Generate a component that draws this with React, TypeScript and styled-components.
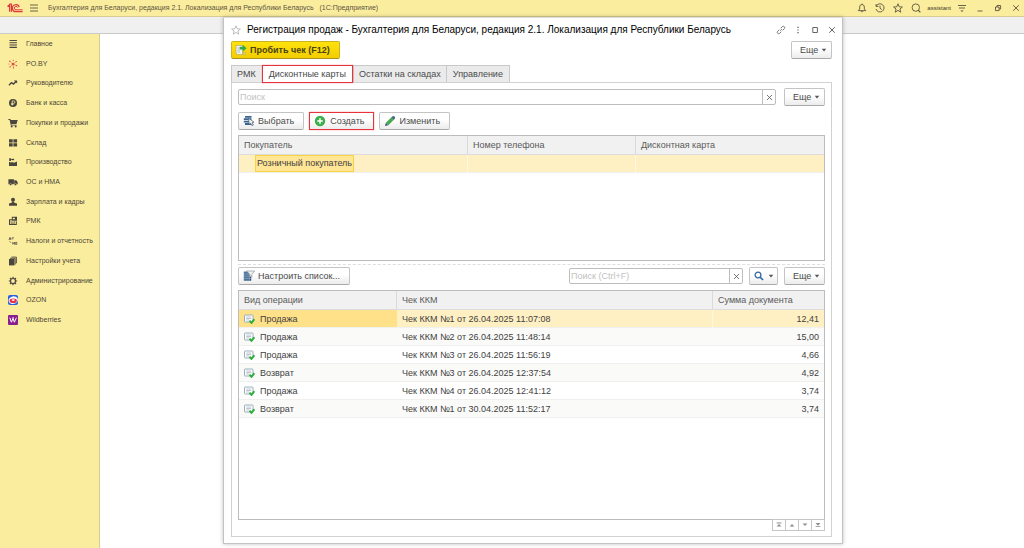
import React from 'react';
import styled, { createGlobalStyle, css } from 'styled-components';

const GlobalStyle = createGlobalStyle`
  *, *::before, *::after { box-sizing: border-box; }
  body {
    margin: 0;
    background: #fff;
    color: #3f3f3f;
    font: 9px/12px "Liberation Sans", Arial, sans-serif;
  }
  button, input { font: inherit; color: inherit; margin: 0; padding: 0; }
  svg { display: block; flex: none; }
`;

/* ---------- application frame ---------- */

const Page = styled.div`
  position: relative;
  min-height: 100vh;
  display: flex;
  flex-direction: column;
`;

const TopBar = styled.header`
  display: flex;
  align-items: center;
  height: 17px;
  padding: 0 3px 0 7px;
  background: #fbed9e;
  border-bottom: 1px solid #d8cd91;
  color: #5b5540;
  font-size: 7px;
`;

const AppTitle = styled.span`
  margin-left: 9px;
  flex: 1;
  white-space: pre;
`;

const Tools = styled.div`
  display: flex;
  align-items: center;
  gap: 8px;
`;

const IconButton = styled.button`
  display: flex;
  align-items: center;
  justify-content: center;
  width: 10px;
  height: 12px;
  border: 0;
  background: none;
`;

const MenuButton = styled(IconButton)`
  margin-left: 6px;
`;

const UserLink = styled.a`
  margin: 0 6px;
  color: #3d392b;
  font-size: 6px;
  text-decoration: none;
`;

const SubBar = styled.div`
  height: 17px;
  background: #f0f0f0;
  border-bottom: 1px solid #cbcbcb;
`;

const Body = styled.div`
  flex: 1;
  display: flex;
`;

const SideBar = styled.nav`
  width: 100px;
  background: #fbed9e;
  border-right: 1px solid #d6cb95;
`;

const SideList = styled.ul`
  display: grid;
  grid-auto-rows: 1fr;
  height: 296px;
  margin: 0;
  padding: 0;
  list-style: none;
`;

const SideLink = styled.a`
  display: flex;
  align-items: center;
  gap: 8px;
  height: 100%;
  padding-left: 8px;
  color: #4c4637;
  font-size: 7px;
  text-decoration: none;
  white-space: nowrap;
`;

/* ---------- dialog window ---------- */

const Window = styled.section`
  position: absolute;
  top: 17px;
  bottom: 4px;
  left: 223px;
  right: 181px;
  display: flex;
  flex-direction: column;
  padding: 0 10px 6px 7px;
  background: #fff;
  border: 1px solid #c3c3c3;
  border-top-color: #dcdcdc;
  box-shadow: 0 0 4px rgba(0, 0, 0, 0.25);
`;

const TitleRow = styled.div`
  display: flex;
  align-items: center;
  gap: 6px;
  height: 23px;
  margin-right: -5px;
`;

const WindowTitle = styled.h1`
  flex: 1;
  margin: 0;
  color: #000;
  font-size: 10px;
  font-weight: 400;
  white-space: nowrap;
`;

const WindowTools = styled.div`
  display: flex;
  gap: 7px;
`;

const Row = styled.div<{ $gap?: number }>`
  display: flex;
  align-items: center;
  gap: ${(p) => p.$gap ?? 5}px;
`;

const Spacer = styled.div`
  flex: 1;
`;

const Button = styled.button<{ $kind?: 'primary' | 'marked' }>`
  display: flex;
  align-items: center;
  height: 18px;
  padding: 0 9px 0 4px;
  gap: 3px;
  border: 1px solid #c4c4c4;
  border-bottom-color: #a9a9a9;
  border-radius: 2px;
  background: linear-gradient(#fff 40%, #ececec);
  color: #4a4a4a;
  white-space: nowrap;
  ${(p) =>
    p.$kind === 'primary' &&
    css`
      padding-left: 3px;
      border-color: #cdb320;
      border-bottom-color: #a8931c;
      background: linear-gradient(#ffe30d, #f2cd00);
      color: #4b4310;
      font-weight: 700;
    `}
  ${(p) =>
    p.$kind === 'marked' &&
    css`
      gap: 4px;
      border-color: #e5343c;
      border-radius: 0;
      box-shadow: 0 0 1px #f0646a;
    `}
`;

const MoreButton = styled(Button)`
  justify-content: space-between;
  width: 41px;
  padding: 0 4px 0 8px;
`;

const FindButton = styled(Button)`
  justify-content: space-between;
  width: 29px;
  padding: 0 3px 0 4px;
`;

const Tabs = styled.div`
  display: flex;
  margin: 6px 0 -1px;
`;

const Tab = styled.button<{ $active?: boolean }>`
  height: 18px;
  padding: 0 5px;
  border: 1px solid #c9c9c9;
  border-right-width: 0;
  background: #ebebeb;
  color: #4a4a4a;
  white-space: nowrap;
  &:first-child { padding-right: 6px; }
  &:last-child { padding: 0 6px; border-right-width: 1px; }
  ${(p) =>
    p.$active &&
    css`
      z-index: 1;
      padding: 0 6px;
      border: 1px solid #e5343c;
      box-shadow: 0 0 1px #f0646a;
      background: #fff;
    `}
`;

const Panel = styled.div`
  flex: 1;
  display: flex;
  flex-direction: column;
  padding: 5px 6px;
  border: 1px solid #d2d2d2;
`;

const SearchBox = styled.div<{ $wide?: boolean }>`
  display: flex;
  flex: ${(p) => (p.$wide ? '1' : '0 0 174px')};
  margin-right: ${(p) => (p.$wide ? 3 : 0)}px;
  height: 16px;
  border: 1px solid #bdbdbd;
  border-radius: 2px;
`;

const SearchInput = styled.input`
  flex: 1;
  min-width: 0;
  border: 0;
  outline: 0;
  background: none;
  padding: 0 1px;
  &::placeholder { color: #c2c2c2; opacity: 1; }
`;

const ClearButton = styled.button`
  display: flex;
  align-items: center;
  justify-content: center;
  width: 13px;
  border: 0;
  border-left: 1px solid #bdbdbd;
  background: none;
`;

const Actions = styled(Row)`
  margin: 6px 0 5px;
`;

const GridBox = styled.div<{ $grow?: boolean }>`
  flex: ${(p) => (p.$grow ? '1' : '0 0 126px')};
  border: 1px solid #bcbcbc;
`;

const Table = styled.table`
  width: 100%;
  table-layout: fixed;
  border-spacing: 0;
`;

const Th = styled.th<{ $width?: number }>`
  width: ${(p) => (p.$width ? `${p.$width}px` : 'auto')};
  height: 19px;
  padding: 0 5px;
  background: #f1f1f1;
  border-bottom: 1px solid #dcdcdc;
  border-right: 1px solid #dadada;
  color: #5a5a5a;
  font-weight: 400;
  text-align: left;
  white-space: nowrap;
  &:last-child { border-right: 0; }
`;

const Tr = styled.tr<{ $selected?: boolean }>`
  background: ${(p) => (p.$selected ? '#fff0c3' : '#fff')};
  &:nth-child(even) { background: #fafaf9; }
`;

const Td = styled.td<{ $current?: boolean; $num?: boolean; $line?: boolean }>`
  height: 18px;
  padding: 0 5px;
  border-bottom: 1px solid #f0f0ee;
  border-right: ${(p) => (p.$line ? '1px solid #fff8e0' : '0')};
  background: ${(p) => (p.$current ? '#ffe18a' : 'transparent')};
  text-align: ${(p) => (p.$num ? 'right' : 'left')};
  white-space: nowrap;
`;

const CurrentCell = styled.span`
  display: inline-block;
  height: 17px;
  margin-left: 11px;
  padding: 0 1px;
  line-height: 15px;
  vertical-align: top;
  border: 1px solid #f8d440;
  background: #ffe596;
`;

const Splitter = styled.hr`
  width: 100%;
  margin: 3px 0 2px;
  border: 0;
  border-top: 1px dashed #dedede;
`;

const ListActions = styled(Row)`
  margin-bottom: 5px;
`;

const Pager = styled.div`
  display: flex;
  justify-content: flex-end;
  margin-top: -1px;
`;

const PagerButton = styled.button`
  display: flex;
  align-items: center;
  justify-content: center;
  width: 14px;
  height: 12px;
  margin-left: -1px;
  border: 1px solid #c6c6c6;
  background: #fff;
`;

/* ---------- icons ---------- */

type Shape = { children: React.ReactNode; size?: number; color?: string };

const Line = ({ children, size = 10, color = '#5b5540' }: Shape) => (
  <svg width={size} height={size} viewBox="0 0 10 10" fill="none" stroke={color} strokeWidth="0.9" aria-hidden="true">
    {children}
  </svg>
);

const Solid = ({ children, size = 10, color = '#4b4540' }: Shape) => (
  <svg width={size} height={size} viewBox="0 0 10 10" fill={color} aria-hidden="true">
    {children}
  </svg>
);

const Logo = () => (
  <svg width="16" height="10" viewBox="0 0 16 10" fill="none" stroke="#e0353c" aria-hidden="true">
    <path d="M0.400 3.500 2.600 1.900V8.800M2 1.300 3.200 1.200H4.400V8.800" strokeWidth="1.200" />
    <path d="M12.300 4.200A3.500 3.500 0 1 0 9 8.700H15.600" strokeWidth="1.200" />
    <path d="M10.700 4.600A1.700 1.700 0 1 0 9 6.800H15.600" strokeWidth="1" />
  </svg>
);

const Burger = () => (
  <Line><path d="M1 2h8M1 5h8M1 8h8" /></Line>
);

const Caret = () => (
  <svg width="6" height="4" viewBox="0 0 6 4" fill="#555" aria-hidden="true"><path d="M0.700 0.800h4.600L3 3.400z" /></svg>
);

const Cross = ({ size = 10, color = '#555' }: { size?: number; color?: string }) => (
  <Line size={size} color={color}><path d="M2.200 2.200l5.600 5.600M7.800 2.200 2.200 7.800" /></Line>
);

const starPath = 'M5 0.8 6.2 3.8 9.4 4 6.9 6 7.8 9.2 5 7.4 2.2 9.2 3.1 6 0.6 4 3.8 3.8z';

const topIcons = [
  ['Уведомления', <path d="M1.200 7.600h7.600L7.300 6V4C7.300 2.400 6.300 1.600 5 1.600S2.700 2.400 2.700 4v2zM5 0.600v1M4 8.200c.2.900 1.800.9 2 0" />],
  ['История', <path d="M1.200 3.200A4.100 4.100 0 1 1 1 6M1.100 1v2.400h2.400M5 2.600v2.700l1.800 1.100" />],
  ['Избранное', <path d={starPath} />],
  ['Поиск', <g><circle cx="4.800" cy="4.600" r="3.700" /><path d="M7.200 7.200 9.400 9.400" strokeWidth="1.200" /></g>],
] as const;

const sideItems: [string, React.ReactNode][] = [
  ['Главное', <Solid><path d="M1.500 1h7.400v1.100H1.500zM1.500 3.200h7.400v1.100H1.500zM1.500 5.400h7.400v1.100H1.500zM1.500 7.700h7.400v1.200H1.500z" /></Solid>],
  ['PO.BY', <Solid color="#e0483c"><circle cx="5" cy="5" r="1.300" /><circle cx="1.800" cy="2.200" r=".7" /><circle cx="5.300" cy="1.300" r=".6" /><circle cx="8.300" cy="2.600" r=".7" /><circle cx="8.600" cy="6.600" r=".7" /><circle cx="5.500" cy="8.900" r=".6" /><circle cx="2" cy="7.900" r=".7" /><circle cx="1" cy="5" r=".5" /><path d="M1.800 2.200 5 5l3.300-2.400M5 5l3.600 1.600M5 5 2 7.900M5 5l.5 3.900" fill="none" stroke="#e0483c" strokeWidth=".5" /></Solid>],
  ['Руководителю', <Line color="#4b4540"><path d="M1 7.300 3.500 4.600 5.500 6 8.200 3.200" strokeWidth="1.400" /><path d="M5.800 2.400h3.300v3.200z" fill="#4b4540" stroke="none" /></Line>],
  ['Банк и касса', <Solid><circle cx="5" cy="5" r="4" /><path d="M4.200 7.500V2.900h1.500a1.200 1.200 0 0 1 0 2.500H3.200M3.200 6.500h2.300" fill="none" stroke="#fbed9e" strokeWidth=".8" /></Solid>],
  ['Покупки и продажи', <Solid><path d="M.4 1.100h1.900l.5.900h6.900L8.500 6.100H3.400l.2.600h4.900v.8H2.800L1.600 2H.4z" /><circle cx="3.700" cy="8.500" r="1" /><circle cx="7.700" cy="8.500" r="1" /></Solid>],
  ['Склад', <Solid><path d="M1 1.300h3.700v3.300H1zM5.400 1.300h3.700v3.300H5.400zM1 5.300h3.700v3.300H1zM5.400 5.300h3.700v3.300H5.400z" /></Solid>],
  ['Производство', <Solid><path d="M1 9V4.800l2.500 1V4.800l2.500 1 3-1.400V9z" /><path d="M1.200 4V1.200h1.400l1.200 1 1.200-.8 1.200.8v1H4.600L3 2.800V4z" /></Solid>],
  ['ОС и НМА', <Solid><path d="M.4 2.300h5.500v4.900H.4zM6.200 3.300h2.100l1.400 1.900v2H6.200z" /><circle cx="2.600" cy="7.500" r="1.100" stroke="#fbed9e" strokeWidth=".4" /><circle cx="7.500" cy="7.500" r="1.100" stroke="#fbed9e" strokeWidth=".4" /></Solid>],
  ['Зарплата и кадры', <Solid><circle cx="5" cy="2.800" r="2" /><path d="M4 4.500h2l.3 1.300 2.700.8V8.800H1V6.600l2.700-.8z" /></Solid>],
  ['РМК', <Solid><path d="M3.800.8h5.200v4H3.800zM1 3.300h3v1H2.200v3.600h5.600V5.200h1V9H1zM2.900 5.500h1v.8h-1zM4.500 5.500h1v.8h-1zM6 5.500h1v.8H6zM2.900 6.800H7v.6H2.900z" /><path d="M4.800 1.800h2v1.500h-2z" fill="#fbed9e" /></Solid>],
  ['Налоги и отчетность', <Line color="#4b4540"><path d="M1 4 2 1.300 3 4M1.400 3.100h1.200M3.800 3 4.400 1.700h1.500M4.300 2.900h1M4.800 6v2.600M6.500 6v2.600M4.800 7.300h1.700M7.600 6.300h1.200v2.100H7.600zM1.500 5.200 3 6.700" strokeWidth=".7" /></Line>],
  ['Настройки учета', <Solid><path d="M1 3h5.500v6.400H1z" /><path d="M2 2.300h5.200v6.200M3.400 1.100h5v6.200" fill="none" stroke="#4b4540" strokeWidth=".9" /></Solid>],
  ['Администрирование', <Line color="#4b4540"><circle cx="5" cy="5" r="2.500" strokeWidth="1.200" /><path d="M5 .8v1.600M5 7.600v1.600M.8 5h1.600M7.600 5h1.600M2 2l1.100 1.100M6.900 6.900 8 8M8 2 6.900 3.100M3.100 6.900 2 8" strokeWidth="1.200" /></Line>],
  ['OZON', <Solid><rect width="10" height="10" rx="2" fill="#2a5fe0" /><ellipse cx="5.200" cy="5.200" rx="4.700" ry="3.800" fill="#fff" transform="rotate(-12 5 5)" /><ellipse cx="5.200" cy="5.700" rx="3.700" ry="2.300" fill="#e5324a" /><ellipse cx="5.200" cy="5.100" rx="1.600" ry=".8" fill="#fff" /></Solid>],
  ['Wildberries', <Solid><rect width="10" height="10" rx="1" fill="#8a1f8f" /><path d="M1.800 2.700 3.400 7.200 5 3.400 6.400 7.200 8.400 2.700M4.400 2.900h1.400" fill="none" stroke="#fff" strokeWidth="1" /></Solid>],
];

const ReceiptIcon = () => (
  <svg width="12" height="12" viewBox="0 0 12 12" aria-hidden="true">
    <path d="M1 1.500h6.500V10.500H2.500L1 9z" fill="#f7f7ee" stroke="#9b9a78" strokeWidth=".6" />
    <path d="M2.300 4h3M2.300 6h3M2.300 8h3" stroke="#8b9aa5" strokeWidth=".7" />
    <path d="M4.800 2.800h3V.8l3.800 3.500L7.800 7.600V5.500h-3z" fill="#35a948" />
    <path d="M8.300 8h2v3h-2z" fill="#e8d48a" stroke="#b59d33" strokeWidth=".4" />
  </svg>
);

const SelectIcon = () => (
  <svg width="12" height="12" viewBox="0 0 12 12" aria-hidden="true">
    <path d="M2 1.800h6.500M.8 4.200h7.700M.8 6.600h7M2 9h6" stroke="#396590" strokeWidth="1.800" />
    <path d="M5.500 3.200 11 7.200 9.200 7.600 10.300 10 8.900 10.600 7.800 8.200 6.200 9.500z" fill="#f4f4f4" stroke="#44586a" strokeWidth=".7" />
  </svg>
);

const AddIcon = () => (
  <svg width="12" height="12" viewBox="0 0 12 12" aria-hidden="true">
    <circle cx="6" cy="6" r="5.200" fill="#3cae4c" />
    <path d="M6 3.200v5.600M3.200 6h5.600" stroke="#fff" strokeWidth="1.500" />
  </svg>
);

const PencilIcon = () => (
  <svg width="12" height="12" viewBox="0 0 12 12" aria-hidden="true">
    <path d="M1 11 1.900 7.800 4.300 10.200z" fill="#37507a" />
    <path d="M1.900 7.800 7.200 2.500 9.600 4.900 4.300 10.200z" fill="#46a84f" />
    <path d="M7.200 2.500 8.200 1.500a1.400 1.400 0 0 1 2.400 2.400L9.600 4.900z" fill="#3c6f7a" />
  </svg>
);

const FilterIcon = () => (
  <svg width="12" height="12" viewBox="0 0 12 12" aria-hidden="true">
    <path d="M.8 1.500h5.700v9.300H.8z" fill="#4c7499" />
    <path d="M6.500 5.500h1.700v5.300H6.500z" fill="#35597d" />
    <path d="M.8 4h5.400M.8 6.200h7.400M.8 8.400h7.400" stroke="#a9c1d5" strokeWidth=".5" />
    <path d="M3.600 1h8L8.900 4.400V7.200L7 6.200V4.400z" fill="#f1f1f1" stroke="#8e979e" strokeWidth=".7" />
  </svg>
);

const FindIcon = () => (
  <svg width="10" height="10" viewBox="0 0 10 10" fill="none" stroke="#3268a6" aria-hidden="true">
    <circle cx="4" cy="4" r="2.900" strokeWidth="1.300" /><path d="M6 6l3 3" strokeWidth="1.700" />
  </svg>
);

const DocIcon = styled.svg`
  display: inline-block;
  margin-right: 5px;
  vertical-align: middle;
`;

const PostedDoc = () => (
  <DocIcon width="11" height="10" viewBox="0 0 11 10" aria-hidden="true">
    <rect x=".5" y="1" width="8.500" height="7" rx=".6" fill="#fff" stroke="#8fa6b6" strokeWidth=".9" />
    <path d="M2.200 3h5M2.200 4.500h5M2.200 6h3" stroke="#a0aeb8" strokeWidth=".7" />
    <path d="M5.500 6.600 7.500 8.900 10.400 5.200" fill="none" stroke="#2fae40" strokeWidth="1.900" />
  </DocIcon>
);

const pagerIcons = [
  ['В начало', <path d="M2 2h6v1H2zM2 7h6L5 3.600z" />],
  ['Вверх', <path d="M2 7h6L5 3.600z" />],
  ['Вниз', <path d="M2 3h6L5 6.400z" />],
  ['В конец', <path d="M2 2.600h6L5 6zM2 6.600h6v1H2z" />],
] as const;

/* ---------- data ---------- */

const receipts = [
  ['Продажа', 'Чек ККМ №1 от 26.04.2025 11:07:08', '12,41'],
  ['Продажа', 'Чек ККМ №2 от 26.04.2025 11:48:14', '15,00'],
  ['Продажа', 'Чек ККМ №3 от 26.04.2025 11:56:19', '4,66'],
  ['Возврат', 'Чек ККМ №3 от 26.04.2025 12:37:54', '4,92'],
  ['Продажа', 'Чек ККМ №4 от 26.04.2025 12:41:12', '3,74'],
  ['Возврат', 'Чек ККМ №1 от 30.04.2025 11:52:17', '3,74'],
];

const More = () => (
  <MoreButton type="button">Еще<Caret /></MoreButton>
);

const Search = ({ label, wide }: { label: string; wide?: boolean }) => (
  <SearchBox $wide={wide}>
    <SearchInput type="text" placeholder={label} aria-label={label} />
    <ClearButton type="button" aria-label="Очистить"><Cross size={9} /></ClearButton>
  </SearchBox>
);

export default function App() {
  return (
    <Page>
      <GlobalStyle />
      <TopBar>
        <Logo />
        <MenuButton type="button" aria-label="Меню"><Burger /></MenuButton>
        <AppTitle>Бухгалтерия для Беларуси, редакция 2.1. Локализация для Республики Беларусь   (1С:Предприятие)</AppTitle>
        <Tools>
          {topIcons.map(([label, shape]) => (
            <IconButton key={label} type="button" aria-label={label}><Line>{shape}</Line></IconButton>
          ))}
        </Tools>
        <UserLink href="#user">assistant</UserLink>
        <Tools>
          <IconButton type="button" aria-label="Настройки"><Line><path d="M1 2.500h8M2 5h6" /><path d="M3.400 7.400h3.200L5 9z" fill="#5b5540" stroke="none" /></Line></IconButton>
          <IconButton type="button" aria-label="Свернуть"><Line><path d="M2.500 8h5" /></Line></IconButton>
          <IconButton type="button" aria-label="Восстановить"><Line><path d="M2.500 4h3.600v3.600H2.500zM4 4V2.500h3.600V6H6.100" /></Line></IconButton>
          <IconButton type="button" aria-label="Выход"><Cross color="#5b5540" /></IconButton>
        </Tools>
      </TopBar>
      <SubBar />
      <Body>
        <SideBar>
          <SideList>
            {sideItems.map(([label, icon]) => (
              <li key={label}><SideLink href="#section">{icon}{label}</SideLink></li>
            ))}
          </SideList>
        </SideBar>
      </Body>

      <Window role="dialog" aria-labelledby="window-title">
        <TitleRow>
          <IconButton type="button" aria-label="В избранное"><Line color="#b5b5b5"><path d={starPath} /></Line></IconButton>
          <WindowTitle id="window-title">
            Регистрация продаж - Бухгалтерия для Беларуси, редакция 2.1. Локализация для Республики Беларусь
          </WindowTitle>
          <WindowTools>
            <IconButton type="button" aria-label="Ссылка">
              <Line color="#6a6a6a"><path d="M4.200 5.800 5.900 4.100M4.700 3.300 6.300 1.700a1.400 1.400 0 0 1 2 2L6.700 5.300M3.300 4.700 1.700 6.300a1.400 1.400 0 0 0 2 2L5.300 6.700" /></Line>
            </IconButton>
            <IconButton type="button" aria-label="Еще действия">
              <Solid color="#555"><path d="M4.400 1.800h1.200V3H4.400zM4.400 4.400h1.200v1.200H4.400zM4.400 7h1.200v1.200H4.400z" /></Solid>
            </IconButton>
            <IconButton type="button" aria-label="Развернуть"><Line color="#555"><path d="M2.800 2.500h4.600v5H2.800z" /></Line></IconButton>
            <IconButton type="button" aria-label="Закрыть"><Cross /></IconButton>
          </WindowTools>
        </TitleRow>

        <Row>
          <Button type="button" $kind="primary"><ReceiptIcon />Пробить чек (F12)</Button>
          <Spacer />
          <More />
        </Row>

        <Tabs role="tablist">
          <Tab type="button" role="tab">РМК</Tab>
          <Tab type="button" role="tab" aria-selected="true" $active>Дисконтные карты</Tab>
          <Tab type="button" role="tab">Остатки на складах</Tab>
          <Tab type="button" role="tab">Управление</Tab>
        </Tabs>

        <Panel>
          <Row>
            <Search label="Поиск" wide />
            <More />
          </Row>

          <Actions>
            <Button type="button"><SelectIcon />Выбрать</Button>
            <Button type="button" $kind="marked"><AddIcon />Создать</Button>
            <Button type="button"><PencilIcon />Изменить</Button>
          </Actions>

          <GridBox>
            <Table>
              <thead>
                <tr><Th $width={229}>Покупатель</Th><Th $width={168}>Номер телефона</Th><Th>Дисконтная карта</Th></tr>
              </thead>
              <tbody>
                <Tr $selected>
                  <Td $line><CurrentCell>Розничный покупатель</CurrentCell></Td><Td $line /><Td />
                </Tr>
              </tbody>
            </Table>
          </GridBox>

          <Splitter />

          <ListActions $gap={6}>
            <Button type="button"><FilterIcon />Настроить список...</Button>
            <Spacer />
            <Search label="Поиск (Ctrl+F)" />
            <FindButton type="button" aria-label="Найти"><FindIcon /><Caret /></FindButton>
            <More />
          </ListActions>

          <GridBox $grow>
            <Table>
              <thead>
                <tr><Th $width={158}>Вид операции</Th><Th $width={316}>Чек ККМ</Th><Th>Сумма документа</Th></tr>
              </thead>
              <tbody>
                {receipts.map(([kind, name, sum], i) => (
                  <Tr key={name} $selected={i === 0}>
                    <Td $current={i === 0}><PostedDoc />{kind}</Td>
                    <Td $line={i === 0}>{name}</Td>
                    <Td $num>{sum}</Td>
                  </Tr>
                ))}
              </tbody>
            </Table>
          </GridBox>

          <Pager>
            {pagerIcons.map(([label, shape]) => (
              <PagerButton key={label} type="button" aria-label={label}><Solid size={8} color="#8d8d8d">{shape}</Solid></PagerButton>
            ))}
          </Pager>
        </Panel>
      </Window>
    </Page>
  );
}
